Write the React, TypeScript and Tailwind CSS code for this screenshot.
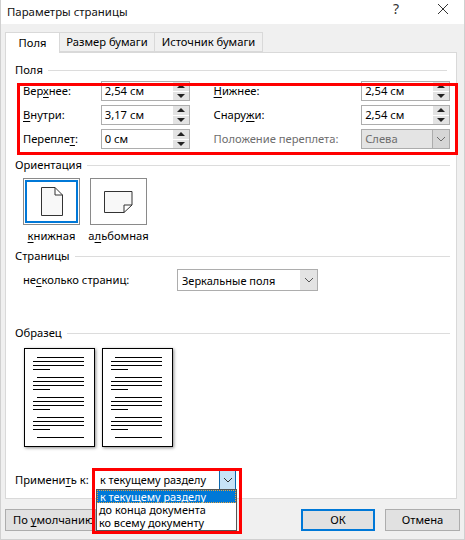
import React from "react";

const font = { fontFamily: '"Noto Sans", sans-serif' };

function U({ children }: { children: React.ReactNode }) {
  return <span className="underline underline-offset-2 decoration-1">{children}</span>;
}

function Group({ title, className }: { title: string; className: string }) {
  return (
    <div className={`flex items-center gap-[5px] h-[18px] ${className}`}>
      <span className="text-[11.2px] leading-none text-black">{title}</span>
      <div className="flex-1 h-px bg-[#dcdcdc]" />
    </div>
  );
}

function Spin({ value }: { value: string }) {
  return (
    <div className="w-[89px] h-[20px] border border-[#adadad] bg-white flex items-center justify-between pl-[3px]">
      <span className="text-[11.2px] leading-none text-black">{value}</span>
      <div className="w-[16px] h-full flex flex-col gap-px">
        <div className="flex-1 bg-[#e3e3e3] flex items-center justify-center">
          <div className="w-0 h-0 border-x-[4px] border-x-transparent border-b-[4px] border-b-[#222]" />
        </div>
        <div className="flex-1 bg-[#e3e3e3] flex items-center justify-center">
          <div className="w-0 h-0 border-x-[4px] border-x-transparent border-t-[4px] border-t-[#222]" />
        </div>
      </div>
    </div>
  );
}

function Chevron({ color = "#555" }: { color?: string }) {
  return (
    <svg width="10" height="6" viewBox="0 0 10 6" fill="none">
      <path d="M1 1l4 4 4-4" stroke={color} strokeWidth="1" />
    </svg>
  );
}

function Lines() {
  const groups = [0, 1, 2, 3];
  return (
    <div className="flex flex-col pt-[8px] pl-[8px]">
      {groups.map((g) => (
        <div key={g} className="flex flex-col gap-[3px] mb-[7px]">
          <div className="h-px bg-black w-[47px] ml-[4px]" />
          <div className="h-px bg-black w-[51px]" />
          <div className="h-px bg-black w-[51px]" />
          <div className="h-px bg-black w-[17px]" />
        </div>
      ))}
      <div className="h-px bg-black w-[47px] ml-[4px]" />
    </div>
  );
}

function Page() {
  return (
    <div className="w-[71px] h-[99px] bg-white border border-black shadow-[1px_1px_3px_rgba(0,0,0,0.45)]">
      <Lines />
    </div>
  );
}

export default function App() {
  return (
    <div style={font} className="relative w-[465px] h-[540px] overflow-hidden bg-[#f0f0f0] border-x border-b border-[#d0d0d0] text-black">
      <div className="h-[24px] bg-white flex items-center pl-[6px] relative">
        <span className="text-[11.4px] leading-none text-[#111]">Параметры страницы</span>
        <span className="absolute left-[392px] top-[1px] text-[14px] leading-[16px] text-[#333]">?</span>
        <svg className="absolute left-[436px] top-[3px]" width="12" height="12" viewBox="0 0 12 12" fill="none">
          <path d="M1 1l10 10M11 1L1 11" stroke="#333" strokeWidth="1" />
        </svg>
      </div>

      <div className="flex pl-[4px] h-[29px] items-end relative z-10">
        <div className="w-[55px] h-[21px] bg-white border border-b-0 border-[#d9d9d9] text-[11.2px] leading-none flex items-center justify-center">
          Поля
        </div>
        <div className="w-[95px] h-[20px] mb-px bg-[#f0f0f0] border border-[#d9d9d9] border-l-0 text-[11.2px] leading-none flex items-center justify-center">
          Размер бумаги
        </div>
        <div className="w-[108px] h-[20px] mb-px bg-[#f0f0f0] border border-[#d9d9d9] border-l-0 text-[11.2px] leading-none flex items-center justify-center">
          Источник бумаги
        </div>
      </div>

      <div className="ml-[4px] w-[452px] h-[447px] -mt-px bg-white border border-[#d9d9d9] pl-[9px] pr-[6px]">
        <Group title="Поля" className="mt-[8px] mr-[3px]" />

        <div className="mt-[2px] pl-[8px] flex flex-col gap-[4px]">
          <div className="flex items-center h-[20px] text-[11.2px] leading-none">
            <div className="w-[78px]">Вер<U>х</U>нее:</div>
            <Spin value="2,54 см" />
            <div className="w-[148px] ml-[24px]"><U>Н</U>ижнее:</div>
            <Spin value="2,54 см" />
          </div>
          <div className="flex items-center h-[20px] text-[11.2px] leading-none">
            <div className="w-[78px]"><U>В</U>нутри:</div>
            <Spin value="3,17 см" />
            <div className="w-[148px] ml-[24px]">Снару<U>ж</U>и:</div>
            <Spin value="2,54 см" />
          </div>
          <div className="flex items-center h-[20px] text-[11.2px] leading-none">
            <div className="w-[78px]">Перепле<U>т</U>:</div>
            <Spin value="0 см" />
            <div className="w-[148px] ml-[24px] text-[#6d6d6d]">Положение переплета:</div>
            <div className="w-[89px] h-[20px] bg-[#e4e4e4] border border-[#acacac] flex items-center justify-between pl-[3px]">
              <span className="text-[#6d6d6d]">Слева</span>
              <div className="w-[17px] h-full bg-[#d6d6d6] border-l border-[#acacac] flex items-center justify-center">
                <Chevron color="#6d6d6d" />
              </div>
            </div>
          </div>
        </div>

        <Group title="Ориентация" className="mt-[7px]" />

        <div className="flex pl-[8px] gap-[10px] mt-[4px]">
          <div className="flex flex-col items-center w-[57px]">
            <div className="w-[57px] h-[47px] border border-[#8a8a8a] p-px">
              <div className="w-full h-full border-2 border-[#0078d7] flex items-center justify-center">
                <svg width="22" height="29" viewBox="0 0 22 29" fill="none">
                  <path d="M.5.5H14L21.5 8v20.5H.5zM14 .5V8h7.5" fill="#f8f8f8" stroke="#333" />
                </svg>
              </div>
            </div>
            <div className="h-[12px] text-[11.2px] leading-[12px] mt-[5px] whitespace-nowrap"><U>к</U>нижная</div>
          </div>
          <div className="flex flex-col items-center w-[57px]">
            <div className="w-[57px] h-[47px] border border-[#8a8a8a] flex items-center justify-center">
              <svg width="29" height="22" viewBox="0 0 29 22" fill="none">
                <path d="M.5.5h27.5V14L20 21.5H.5zM28 14h-8v7.5" fill="#f8f8f8" stroke="#333" />
              </svg>
            </div>
            <div className="h-[12px] text-[11.2px] leading-[12px] mt-[5px] whitespace-nowrap">а<U>л</U>ьбомная</div>
          </div>
        </div>

        <Group title="Страницы" className="mt-[5px]" />

        <div className="flex items-center pl-[8px] mt-[4px] text-[11.2px] leading-none">
          <div className="w-[154px]">не<U>с</U>колько страниц:</div>
          <div className="w-[141px] h-[22px] border border-[#adadad] flex items-center justify-between pl-[4px]">
            <span className="text-[11px]">Зеркальные поля</span>
            <div className="w-[17px] h-full bg-[#e3e3e3] flex items-center justify-center">
              <Chevron />
            </div>
          </div>
        </div>

        <Group title="Образец" className="mt-[33px]" />

        <div className="flex gap-[7px] ml-[9px] mt-[6px]">
          <Page />
          <Page />
        </div>

        <div className="flex items-center mt-[23px] text-[11.2px] leading-none">
          <div className="w-[82px]">Примени<U>т</U>ь к:</div>
          <div className="w-[139px] h-[20px] flex items-center justify-between pl-[3px] bg-white">
            <span className="text-[10.9px]">к текущему разделу</span>
            <div className="w-[17px] h-full bg-[#c7e3f7] border border-[#0a66ad] flex items-center justify-center">
              <Chevron color="#333" />
            </div>
          </div>
        </div>
      </div>

      <div className="flex items-center mt-[10px] pl-[4px] text-[11.2px] leading-none">
        <div className="w-[91px] h-[22px] bg-[#e1e1e1] border border-[#adadad] flex items-center pl-[7px] whitespace-nowrap overflow-hidden">
          <span>По <U>у</U>молчанию</span>
        </div>
        <div className="ml-[205px] w-[74px] h-[22px] bg-[#e1e1e1] border-2 border-[#0078d7] flex items-center justify-center">
          ОК
        </div>
        <div className="ml-[10px] w-[75px] h-[22px] bg-[#e1e1e1] border border-[#adadad] flex items-center justify-center">
          Отмена
        </div>
      </div>

      {/* combo dropdown list */}
      <div className="absolute left-[95px] top-[489px] w-[141px] h-[42px] bg-white border border-[#555] text-[10.9px] leading-[13px] z-20">
        <div className="bg-[#0078d7] text-white h-[13px] pl-[3px] outline-1 outline-dotted outline-[#e8a33d] -outline-offset-1">к текущему разделу</div>
        <div className="pl-[2px]">до конца документа</div>
        <div className="pl-[2px]">ко всему документу</div>
      </div>

      {/* red annotations */}
      <div className="absolute left-[16px] top-[83px] w-[441px] h-[72px] border-[3px] border-[#f00] z-30" />
      <div className="absolute left-[91px] top-[468px] w-[150px] h-[66px] border-[3px] border-[#f00] z-30" />
    </div>
  );
}
